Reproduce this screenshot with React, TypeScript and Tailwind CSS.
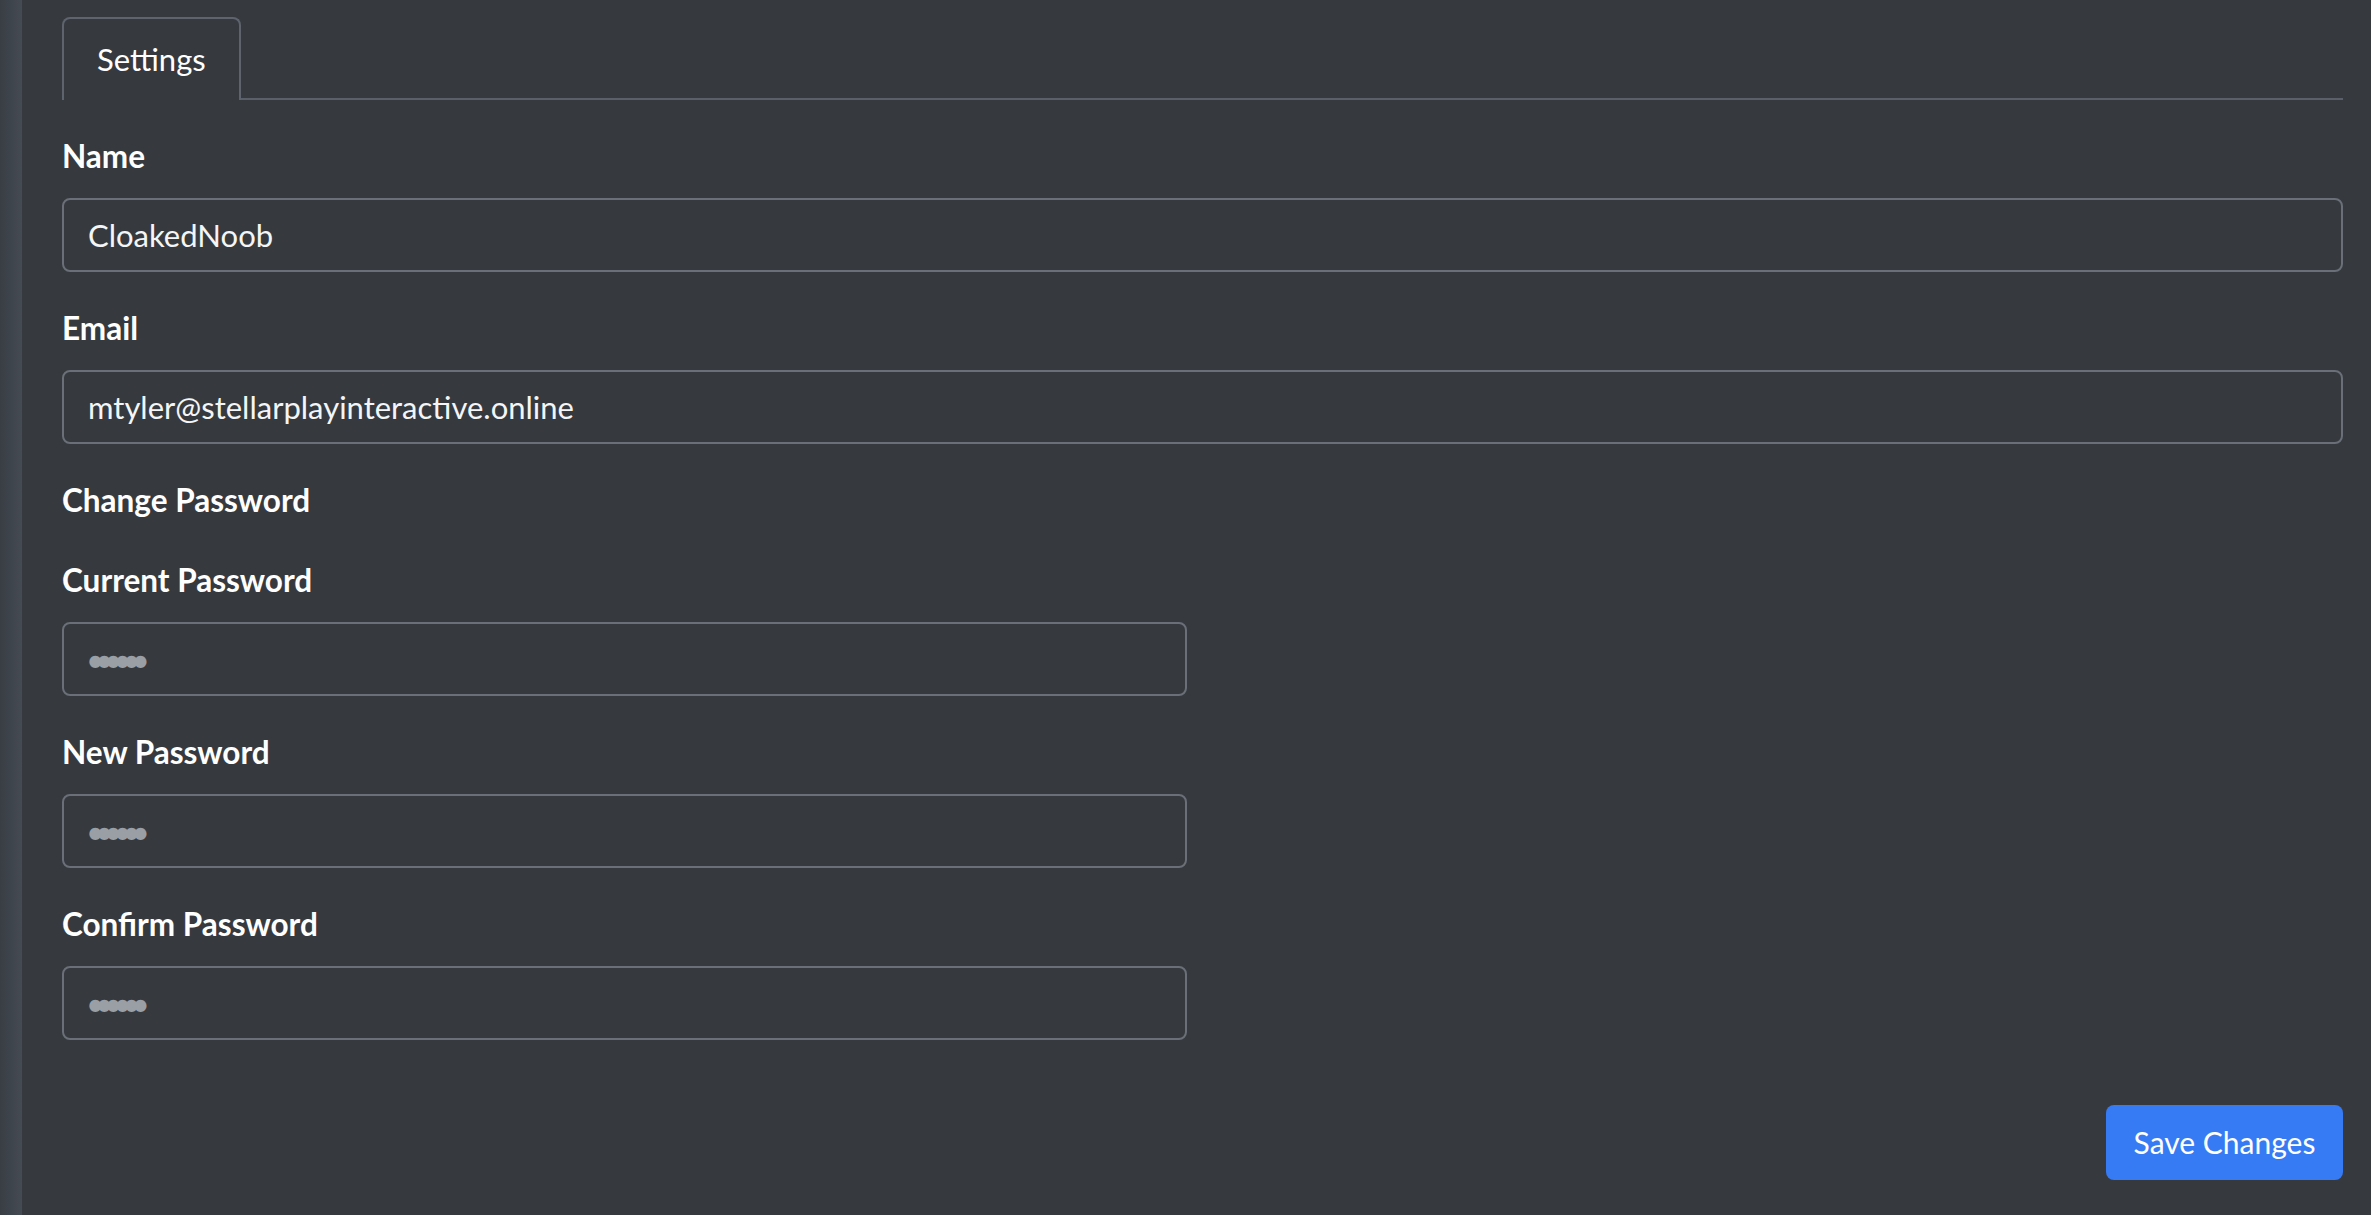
import React from "react";

const font = "font-['Lato','Noto_Sans',sans-serif]";

function Field({ label, value, placeholder, wide }: { label: string; value?: string; placeholder?: string; wide?: boolean }) {
  const secret = !!placeholder;
  return (
    <div className="mb-[32px]">
      <label className="block h-[48px] text-[31.5px] font-bold leading-[48px] text-white">{label}</label>
      <input
        readOnly
        type={secret ? "password" : "text"}
        value={value ?? ""}
        placeholder={placeholder}
        className={`mt-[18px] block h-[74px] rounded-[8px] border-2 border-[#6a6f78] bg-transparent text-[#f4f5f6] outline-none placeholder:text-[#9a9ea5] ${font} ${
          secret ? "w-[1125px] pl-[22px] pr-[24px] text-[32px] tracking-[-9.5px]" : "w-full px-[24px] text-[31px]"
        }`}
      />
    </div>
  );
}

export default function App() {
  return (
    <div className={`flex min-h-[1215px] bg-[#363a3f] ${font}`}>
      {/* sidebar edge */}
      <div className="w-[22px] shrink-0 bg-gradient-to-r from-[#393e45] to-[#454b53]" />

      <main className="flex-1 pl-[40px] pr-[28px] pt-[17px]">
        {/* Tabs */}
        <div className="flex border-b-2 border-[#59606a]">
          <div className="-mb-[2px] flex h-[83px] items-center rounded-t-[8px] border-2 border-b-0 border-[#5d646d] bg-[#363a3f] px-[33px] text-[31px] text-white">
            Settings
          </div>
        </div>

        <div className="pt-[32px]">
          <Field label="Name" value="CloakedNoob" wide />
          <Field label="Email" value="mtyler@stellarplayinteractive.online" wide />

          <div className="mb-[32px] h-[48px] text-[31.5px] font-bold leading-[48px] text-white">Change Password</div>

          <Field label="Current Password" placeholder="••••••" />
          <Field label="New Password" placeholder="••••••" />
          <Field label="Confirm Password" placeholder="••••••" />

          <div className="-mt-[32px] flex justify-end pt-[65px]">
            <button className="h-[75px] w-[237px] rounded-[8px] bg-[#377bf4] text-[30px] text-white">
              Save Changes
            </button>
          </div>
        </div>
      </main>
    </div>
  );
}
